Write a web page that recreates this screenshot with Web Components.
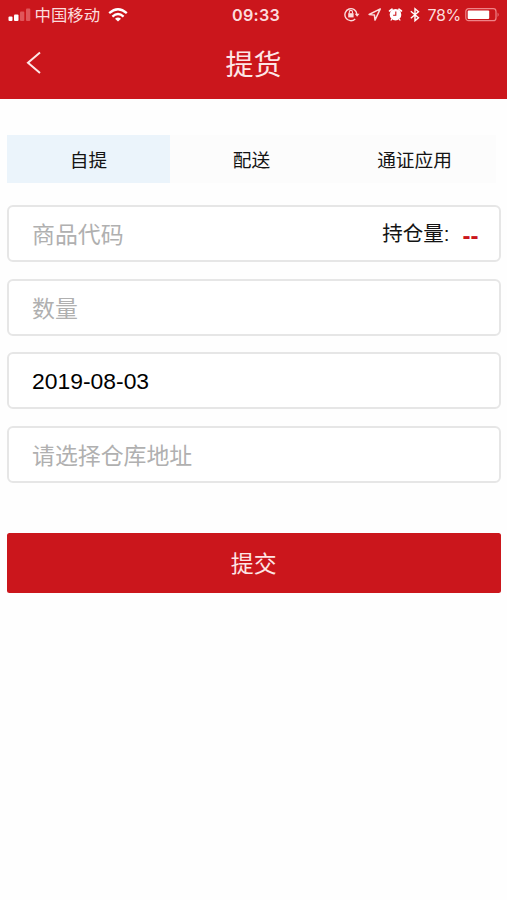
<!DOCTYPE html>
<html lang="zh-CN">
<head>
<meta charset="UTF-8">
<meta name="viewport" content="width=device-width, initial-scale=1.0">
<title>提货</title>
<style>
    body {
        margin: 0;
        background: #fefefe;
        color: #141414;
        font-family: "Liberation Sans", "Noto Sans CJK SC", sans-serif;
    }
    main {
        display: flex;
        flex-direction: column;
        padding: 36px 6.5px 0 7px;
    }
    tab-bar { margin: 0 4.5px 22px 0; }
    form-field { margin-bottom: 16.5px; }
    submit-button { margin-top: 34px; }
</style>
</head>
<body>
    <status-bar carrier="中国移动" time="09:33" battery="78%"></status-bar>
    <nav-bar>提货</nav-bar>
    <main>
        <tab-bar>
            <tab-item active>自提</tab-item>
            <tab-item>配送</tab-item>
            <tab-item>通证应用</tab-item>
        </tab-bar>
        <form-field placeholder="商品代码">
            <hold-amount slot="extra" label="持仓量:">--</hold-amount>
        </form-field>
        <form-field placeholder="数量"></form-field>
        <form-field value="2019-08-03"></form-field>
        <form-field placeholder="请选择仓库地址"></form-field>
        <submit-button>提交</submit-button>
    </main>

<script>
class StatusBar extends HTMLElement {
    constructor() {
        super();
        this.root = this.attachShadow({ mode: 'open' });
        this.root.innerHTML = /*html*/ `
            <style>
                :host {
                    display: grid;
                    grid-template-columns: 1fr auto 1fr;
                    align-items: center;
                    height: 29px;
                    padding: 0 7px 0 8px;
                    background: #cb161c;
                    color: #fbdcdc;
                    font-family: Inter, "Noto Sans CJK SC", sans-serif;
                    line-height: 29px;
                }
                div { display: flex; align-items: center; height: 29px; }
                svg { display: block; flex: none; }
                #carrier { font-size: 16.4px; line-height: 31px; margin: 0 8px 0 3.5px; }
                #time { font-size: 16.2px; font-weight: 600; line-height: 30px; letter-spacing: .2px; padding-left: 4px; }
                #right { justify-content: flex-end; }
                #battery { font-size: 16px; line-height: 30px; margin: 0 4px 0 7px; letter-spacing: -.3px; }
            </style>
            <div>
                <svg width="23" height="14" viewBox="0 0 23 14">
                    <g fill="#fff"><rect x=".5" y="8.5" width="4" height="4.5" rx="1"/><rect x="6" y="6.5" width="4.5" height="6.5" rx="1"/></g>
                    <g fill="#e0565a"><rect x="12" y="3.5" width="4.3" height="9.5" rx="1"/><rect x="18" y=".5" width="4.3" height="12.5" rx="1"/></g>
                </svg>
                <span id="carrier"></span>
                <svg width="20" height="14" viewBox="0 0 20 14" fill="none" stroke="#fff" stroke-width="2.3">
                    <path d="M1.2 5.2Q10-2.6 18.8 5.2M4.4 8.6Q10 3.5 15.6 8.6"/>
                    <path d="M10 13.5 7 10.7Q10 8.2 13 10.7Z" fill="#fff" stroke="none"/>
                </svg>
            </div>
            <span id="time"></span>
            <div id="right">
                <svg width="17" height="16" viewBox="0 0 17 16" fill="none" stroke="#fbdcdc" stroke-width="1.4">
                    <path d="M11.2 11.9A6 6 0 1 1 12.9 7.2"/>
                    <path d="M10.7 6.8h4.8L13.1 9.8Z" fill="#fbdcdc" stroke="none"/>
                    <rect x="4.2" y="6.2" width="5.4" height="4.2" fill="#fbdcdc" stroke="none"/>
                    <path d="M5.3 6.4V5a1.6 1.6 0 0 1 3.2 0V6.4" stroke-width="1.1"/>
                </svg>
                <svg style="margin-left:7px" width="15" height="16" viewBox="0 0 15 16" fill="none" stroke="#fbdcdc" stroke-width="1.5" stroke-linejoin="round">
                    <path d="M12.3 1.9 1.1 7.5 6.4 7.9 7 13.1Z"/>
                </svg>
                <svg style="margin-left:5px" width="15" height="16" viewBox="0 0 15 16">
                    <circle cx="7.5" cy="7.7" r="5.8" fill="#fff"/>
                    <path d="M1.6 3.9 4 2.2M11 2.2l2.4 1.7" stroke="#fff" stroke-width="1.8" stroke-linecap="round"/>
                    <path d="m3.8 12-1 1.5M11.2 12l1 1.5" stroke="#fff" stroke-width="1.3"/>
                    <path d="M7.8 4.6v3.6H5.1" fill="none" stroke="#cb161c" stroke-width="1.1"/>
                </svg>
                <svg style="margin-left:7px" width="10" height="16" viewBox="0 0 10 16" fill="none" stroke="#fff" stroke-width="1.4">
                    <path d="M.8 4.3 8.5 10.8 5 13.8v-12L8.5 4.7.8 11.2"/>
                </svg>
                <span id="battery"></span>
                <svg width="35" height="14" viewBox="0 0 35 14">
                    <rect x=".8" y=".7" width="30.2" height="12" rx="2.8" fill="none" stroke="#ef8488" stroke-width="1.2"/>
                    <rect x="2.7" y="2.4" width="21.5" height="8.6" rx="1" fill="#fff"/>
                    <path d="M32.6 4.5q2 2.2 0 4.4Z" fill="#ef8488"/>
                </svg>
            </div>
        `;
    }

    connectedCallback() {
        for (const id of ['carrier', 'time', 'battery']) {
            this.root.querySelector('#' + id).textContent = this.getAttribute(id);
        }
    }
}

class NavBar extends HTMLElement {
    constructor() {
        super();
        this.root = this.attachShadow({ mode: 'open' });
        this.root.innerHTML = /*html*/ `
            <style>
                :host {
                    display: grid;
                    grid-template-columns: 60px 1fr 60px;
                    align-items: center;
                    height: 69.5px;
                    background: #cb161c;
                    color: #fde6e6;
                    font-size: 28px;
                    line-height: 68px;
                    text-align: center;
                }
                svg { display: block; margin: 0 0 3px 26px; }
                span { padding-top: 3px; }
            </style>
            <svg width="16" height="24" viewBox="0 0 16 24" fill="none" stroke="#fde6e6" stroke-width="2">
                <path d="M14 1.5 2 11.7 14 22"/>
            </svg>
            <span><slot></slot></span>
        `;
    }
}

class TabBar extends HTMLElement {
    constructor() {
        super();
        this.root = this.attachShadow({ mode: 'open' });
        this.root.innerHTML = /*html*/ `
            <style>
                :host { display: flex; height: 48.5px; background: #fcfcfc; }
            </style>
            <slot></slot>
        `;
    }
}

class TabItem extends HTMLElement {
    constructor() {
        super();
        this.root = this.attachShadow({ mode: 'open' });
        this.root.innerHTML = /*html*/ `
            <style>
                :host {
                    flex: 1;
                    font-size: 18.7px;
                    line-height: 52px;
                    text-align: center;
                }
                :host([active]) { background: #ebf4fb; }
            </style>
            <slot></slot>
        `;
    }
}

class FormField extends HTMLElement {
    constructor() {
        super();
        this.root = this.attachShadow({ mode: 'open' });
        this.root.innerHTML = /*html*/ `
            <style>
                :host {
                    display: flex;
                    justify-content: space-between;
                    align-items: flex-start;
                    box-sizing: border-box;
                    height: 57px;
                    padding: 0 20px 0 23px;
                    border: 2px solid #e6e6e6;
                    border-radius: 6px;
                    background: #fff;
                    font-size: 22.9px;
                }
                .placeholder { color: #b0b0b0; line-height: 56px; }
                .value { color: #000; line-height: 55px; }
            </style>
            <span id="text"></span>
            <slot name="extra"></slot>
        `;
        this.text = this.root.querySelector('#text');
    }

    connectedCallback() {
        const value = this.getAttribute('value');
        this.text.textContent = value || this.getAttribute('placeholder');
        this.text.className = value ? 'value' : 'placeholder';
    }
}

class HoldAmount extends HTMLElement {
    constructor() {
        super();
        this.root = this.attachShadow({ mode: 'open' });
        this.root.innerHTML = /*html*/ `
            <style>
                :host { display: flex; gap: 13px; font-size: 20.5px; line-height: 53px; height: 53px; }
                #amount { color: #cb161c; font-weight: bold; font-size: 24px; line-height: 58px; }
            </style>
            <span id="label"></span>
            <span id="amount"><slot></slot></span>
        `;
    }

    connectedCallback() {
        this.root.querySelector('#label').textContent = this.getAttribute('label');
    }
}

class SubmitButton extends HTMLElement {
    constructor() {
        super();
        this.root = this.attachShadow({ mode: 'open' });
        this.root.innerHTML = /*html*/ `
            <style>
                :host {
                    display: block;
                    height: 59.5px;
                    border-radius: 2.5px;
                    background: #cb161c;
                    color: #fde6e6;
                    font-size: 22.9px;
                    line-height: 62px;
                    text-align: center;
                }
            </style>
            <slot></slot>
        `;
    }
}

customElements.define('status-bar', StatusBar);
customElements.define('nav-bar', NavBar);
customElements.define('tab-bar', TabBar);
customElements.define('tab-item', TabItem);
customElements.define('form-field', FormField);
customElements.define('hold-amount', HoldAmount);
customElements.define('submit-button', SubmitButton);
</script>
</body>
</html>
